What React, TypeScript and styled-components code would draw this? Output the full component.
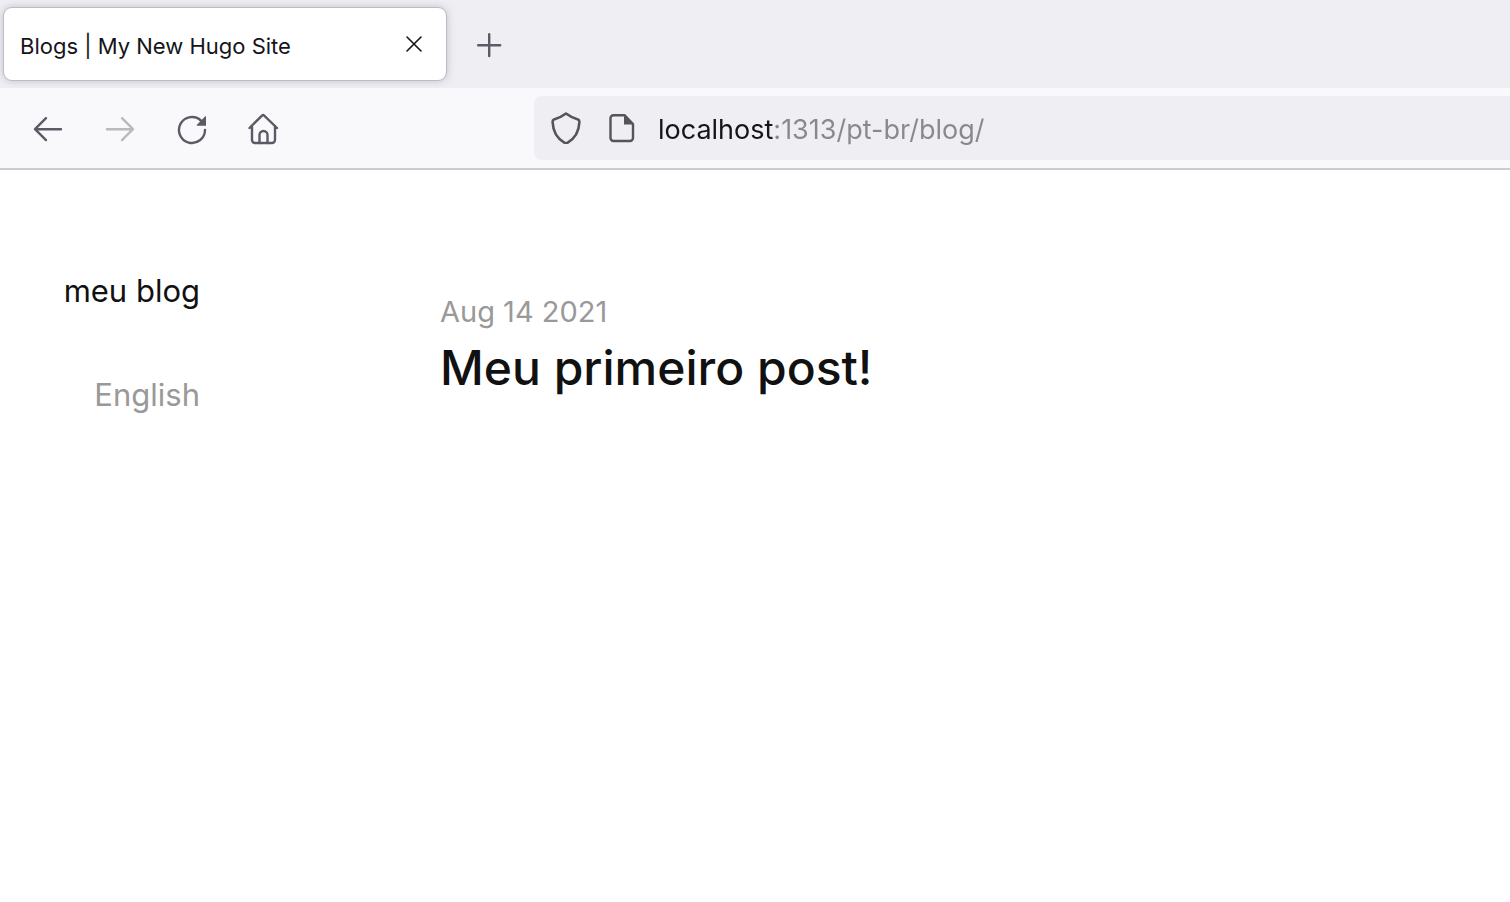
import React, { useState } from "react";
import styled, { createGlobalStyle } from "styled-components";

const GlobalStyle = createGlobalStyle`
  *, *::before, *::after { box-sizing: border-box; }
  body {
    margin: 0;
    background: #ffffff;
    font-family: Inter, "Liberation Sans", sans-serif;
  }
  svg { display: block; }
`;

const TabStrip = styled.header`
  display: flex;
  align-items: center;
  gap: 18px;
  height: 88px;
  padding: 0 4px;
  background: #efeef3;
`;

const Tab = styled.div`
  display: flex;
  align-items: center;
  justify-content: space-between;
  width: 442px;
  height: 72px;
  padding: 4px 12px 0 16px;
  border-radius: 8px;
  background: #ffffff;
  box-shadow: 0 0 0 1px #bdbcc6, 0 0 8px rgba(128, 128, 142, 0.5);
`;

const TabTitle = styled.span`
  color: #15141a;
  font-size: 22px;
  line-height: 28px;
  white-space: nowrap;
`;

const IconButton = styled.button<{ $size: number; $color?: string }>`
  display: flex;
  align-items: center;
  justify-content: center;
  flex: none;
  width: ${(p) => p.$size}px;
  height: ${(p) => p.$size}px;
  padding: 0;
  border: 0;
  border-radius: 8px;
  background: transparent;
  color: ${(p) => p.$color ?? "#5b5b66"};
`;

const CloseButton = styled(IconButton)`
  margin-bottom: 4px;
`;

const NavBar = styled.div`
  display: flex;
  align-items: center;
  justify-content: space-between;
  height: 82px;
  padding-left: 12px;
  border-bottom: 2px solid #cccccf;
  background: #f9f9fb;
`;

const NavButtons = styled.nav`
  display: flex;
  flex: 0 0 522px;
  padding-top: 2px;
`;

const AddressBar = styled.form`
  display: flex;
  align-items: center;
  flex: 1;
  height: 64px;
  border-radius: 8px 0 0 8px;
  background: #efeef3;
`;

const Address = styled.input`
  flex: 1;
  min-width: 0;
  height: 48px;
  margin-left: 4px;
  padding: 2px 0 0 8px;
  border: 0;
  outline: 0;
  color: #88888d;
  background: linear-gradient(to right, #15141a 125px, #88888d 125px);
  background-clip: text;
  -webkit-background-clip: text;
  -webkit-text-fill-color: transparent;
  font: 400 27px/36px Inter, "Liberation Sans", sans-serif;
`;

const Page = styled.div`
  display: flex;
  gap: 240px;
  padding-top: 101px;
`;

const Sidebar = styled.nav`
  display: flex;
  flex-direction: column;
  align-items: flex-end;
  gap: 64px;
  flex: 0 0 200px;
`;

const SideLink = styled.a<{ $muted?: boolean }>`
  color: ${(p) => (p.$muted ? "#999999" : "#111111")};
  font-size: 31px;
  line-height: 40px;
  text-decoration: none;
`;

const Posts = styled.main`
  flex: 1;
  padding-top: 21px;
`;

const PostDate = styled.time`
  display: block;
  color: #999999;
  font-size: 29px;
  line-height: 40px;
`;

const PostTitle = styled.h2`
  margin: 4px 0 0;
  font-size: 48px;
  font-weight: 500;
  line-height: 64px;
`;

const PostLink = styled.a`
  color: #111111;
  text-decoration: none;
`;

const Icon = ({ size = 32, width = 2.4, children }: { size?: number; width?: number; children: React.ReactNode }) => (
  <svg width={size} height={size} viewBox={`0 0 ${size} ${size}`} fill="none" stroke="currentColor"
    strokeWidth={width} strokeLinecap="round" strokeLinejoin="round" aria-hidden="true">
    {children}
  </svg>
);

export default function App() {
  const [address, setAddress] = useState("localhost:1313/pt-br/blog/");
  return (
    <>
      <GlobalStyle />
      <TabStrip>
        <Tab>
          <TabTitle>Blogs | My New Hugo Site</TabTitle>
          <CloseButton $size={40} $color="#15141a" aria-label="Close tab">
            <Icon width={1.6}><path d="M9 9 23 23M23 9 9 23" /></Icon>
          </CloseButton>
        </Tab>
        <IconButton $size={50} aria-label="New tab">
          <Icon><path d="M16.2 6.2V28M5.2 17.2H27.2" /></Icon>
        </IconButton>
      </TabStrip>
      <NavBar>
        <NavButtons aria-label="Browser">
          <IconButton $size={72} aria-label="Back">
            <Icon><path d="M29 16.2H3M14 5.2 3 16.2 14 27.2" /></Icon>
          </IconButton>
          <IconButton $size={72} $color="#bababd" aria-label="Forward">
            <Icon><path d="M3 16.2H29M18 5.2 29 16.2 18 27.2" /></Icon>
          </IconButton>
          <IconButton $size={72} aria-label="Reload">
            <Icon>
              <path d="M29 17A13 13 0 1 1 25.2 7.8" />
              <path d="M30 3.2V12.7H21.2Q20.2 12.5 20.9 11.7L29.3 3.3Z" fill="currentColor" stroke="none" />
            </Icon>
          </IconButton>
          <IconButton $size={72} aria-label="Home">
            <Icon>
              <path d="M1.5 15 14 2.6a1.6 1.6 0 0 1 2.2 0L29 15M4 13V27a3 3 0 0 0 3 3H24a3 3 0 0 0 3-3V13" />
              <path d="M11.5 30V22a4 4 0 0 1 8 0V30" />
            </Icon>
          </IconButton>
        </NavButtons>
        <AddressBar onSubmit={(e) => e.preventDefault()}>
          <IconButton $size={64} $color="#55545a" type="button" aria-label="Tracking protection">
            <Icon width={2.6}>
              <path d="M16 1.5C20 4.5 24.5 6.5 28 7.5Q29.5 8 29.4 10C29 20 25 26.5 17.4 30.8Q16 31.5 14.6 30.8C7 26.5 3 20 2.6 10Q2.5 8 4 7.5C7.5 6.5 12 4.5 16 1.5Z" />
            </Icon>
          </IconButton>
          <IconButton $size={48} $color="#55545a" type="button" aria-label="Site information">
            <Icon width={2.4}>
              <path d="M7.5 3.2H18.5L27 12V26a3 3 0 0 1-3 3H7.500a3 3 0 0 1-3-3V6.2a3 3 0 0 1 3-3Z" />
              <path d="M18 3V12.500H27.500Z" fill="currentColor" stroke="none" />
            </Icon>
          </IconButton>
          <Address aria-label="Address" spellCheck={false} value={address}
            onChange={(e) => setAddress(e.target.value)} />
        </AddressBar>
      </NavBar>
      <Page>
        <Sidebar aria-label="Site">
          <SideLink href="#blog">meu blog</SideLink>
          <SideLink $muted href="#en" lang="en">English</SideLink>
        </Sidebar>
        <Posts>
          <article>
            <PostDate dateTime="2021-08-14">Aug 14 2021</PostDate>
            <PostTitle><PostLink href="#post">Meu primeiro post!</PostLink></PostTitle>
          </article>
        </Posts>
      </Page>
    </>
  );
}
